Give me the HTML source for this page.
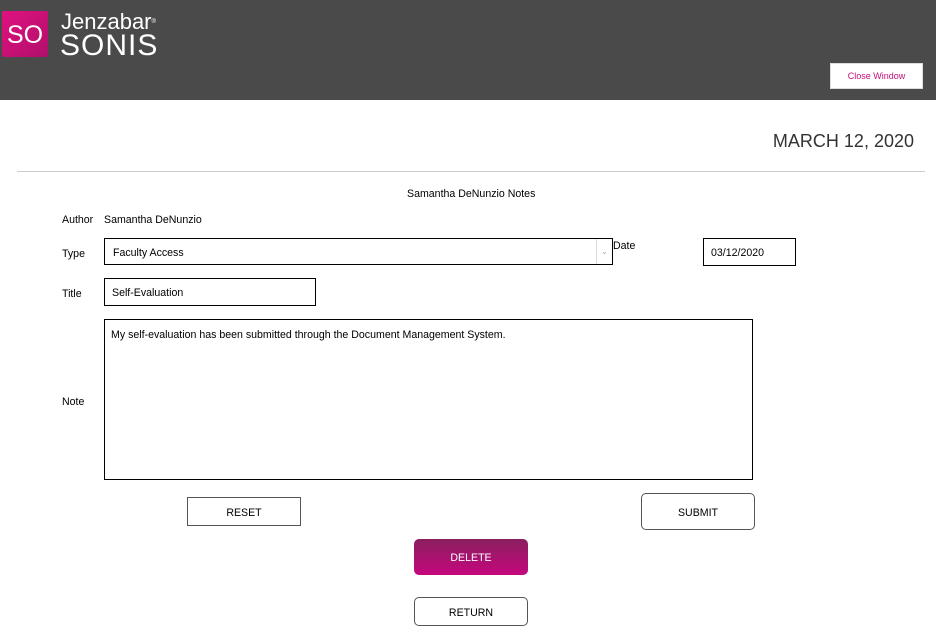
<!DOCTYPE html>
<html><head><style>
*{box-sizing:border-box;margin:0;padding:0}
body{width:936px;height:639px;background:#fff;font-family:"Liberation Sans",Arial,sans-serif;font-size:10.6px;color:#000;position:relative;overflow:hidden}
.hdr{position:absolute;left:0;top:0;width:936px;height:100px;background:#4a4a4a}
.a{position:absolute}
.box{position:absolute;border:1px solid #000;background:#fff;padding-left:7px;padding-top:2px;display:flex;align-items:center}
.btn{position:absolute;border:1px solid #555;border-radius:5px;background:#fff;display:flex;align-items:center;justify-content:center;padding-top:2px}
</style></head><body>
<div class="hdr"></div>
<div class="a" style="left:2px;top:11px;width:46px;height:46px;background:linear-gradient(135deg,#e0117f,#b0106c);border-radius:2px;color:#fff;font-size:25px;line-height:48px;text-align:center">SO</div>
<div class="a" style="left:61px;top:10px;color:#fff;font-size:22px;line-height:24px">Jenzabar<span style="font-size:6px;vertical-align:top">®</span></div>
<div class="a" style="left:60px;top:30px;color:#fff;font-size:30px;line-height:32px;letter-spacing:1px">SONIS</div>
<div class="a" style="left:830px;top:63px;width:93px;height:26px;background:#fff;color:#c2107a;font-size:9px;line-height:25px;text-align:center;border:1px solid #ddd">Close Window</div>
<div class="a" style="right:22px;top:131px;font-size:18px;color:#333">MARCH 12, 2020</div>
<div class="a" style="left:17px;top:171px;width:908px;height:1px;background:#ccc"></div>
<div class="a" style="left:407px;top:188px">Samantha DeNunzio Notes</div>
<div class="a" style="left:62px;top:214px">Author</div>
<div class="a" style="left:104px;top:214px">Samantha DeNunzio</div>
<div class="a" style="left:62px;top:248px">Type</div>
<div class="box" style="left:104px;top:238px;width:509px;height:27px;padding-left:8px">Faculty Access
<div class="a" style="right:0;top:0;width:16px;height:25px;border-left:1px solid #ddd;color:#aaa;font-size:8px;text-align:center;line-height:25px">⌄</div></div>
<div class="a" style="left:613px;top:240px">Date</div>
<div class="box" style="left:703px;top:238px;width:93px;height:28px">03/12/2020</div>
<div class="a" style="left:62px;top:288px">Title</div>
<div class="box" style="left:104px;top:278px;width:212px;height:28px">Self-Evaluation</div>
<div class="a" style="left:62px;top:396px">Note</div>
<div class="a" style="left:104px;top:319px;width:649px;height:161px;border:1px solid #000;padding:9px 6px">My self-evaluation has been submitted through the Document Management System.</div>
<div class="btn" style="left:187px;top:497px;width:114px;height:29px;border-radius:0">RESET</div>
<div class="btn" style="left:641px;top:493px;width:114px;height:37px">SUBMIT</div>
<div class="btn" style="left:414px;top:539px;width:114px;height:36px;border:none;color:#fff;background:linear-gradient(#8a1f5f,#c5077d)">DELETE</div>
<div class="btn" style="left:414px;top:597px;width:114px;height:29px">RETURN</div>
</body></html>
